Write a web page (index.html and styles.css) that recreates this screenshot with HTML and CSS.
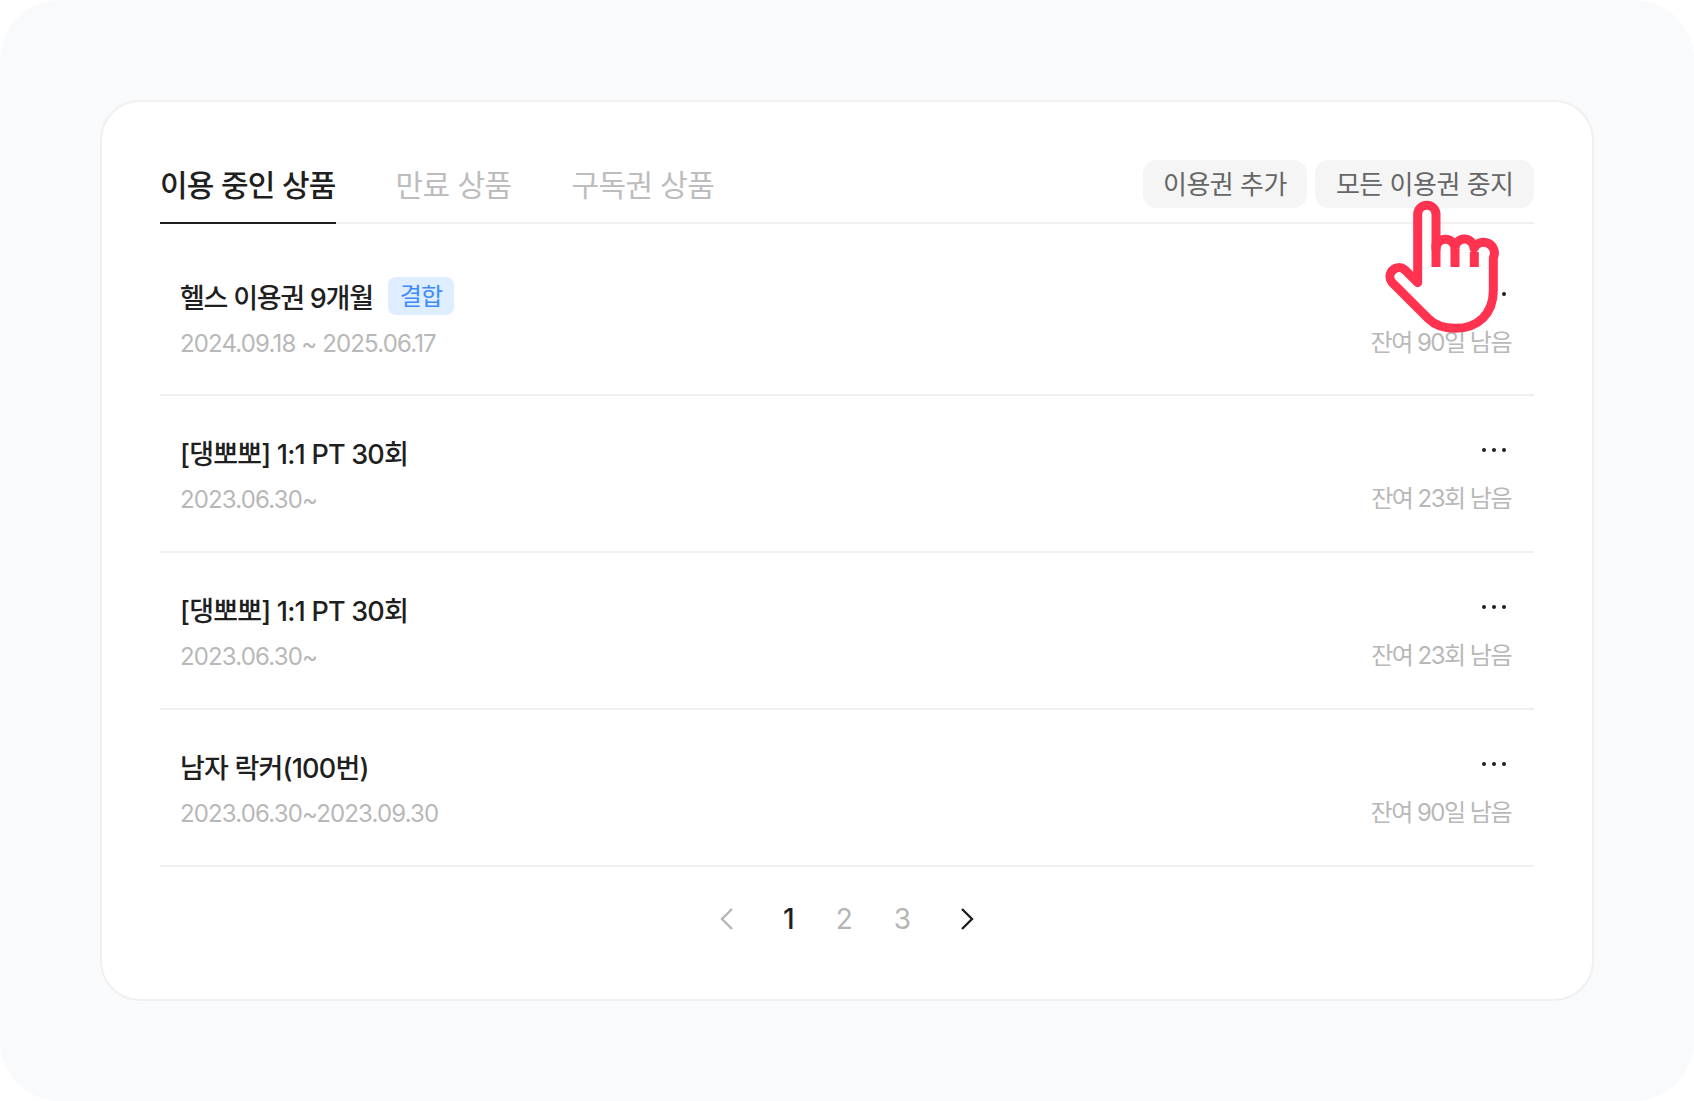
FILE: index.html
```html
<!DOCTYPE html>
<html lang="ko">
<head>
    <meta charset="UTF-8">
    <title>이용권 관리</title>
    <link rel="stylesheet" href="styles.css">
</head>
<body>
    <div class="page">
        <div class="card">
            <div class="tab-bar">
                <div class="tabs">
                    <div class="tab active">이용 중인 상품</div>
                    <div class="tab">만료 상품</div>
                    <div class="tab">구독권 상품</div>
                </div>
                <div class="actions">
                    <div class="btn">이용권 추가</div>
                    <div class="btn">모든 이용권 중지</div>
                </div>
            </div>

            <div class="row first">
                <div class="info">
                    <div class="title tight">헬스 이용권 9개월 <span class="badge">결합</span></div>
                    <div class="date">2024.09.18 ~ 2025.06.17</div>
                </div>
                <div class="side">
                    <div class="more"><i></i><i></i><i></i></div>
                    <div class="left">잔여 90일 남음</div>
                </div>
            </div>
            <div class="row">
                <div class="info">
                    <div class="title">[댕뽀뽀] 1:1 PT 30회</div>
                    <div class="date">2023.06.30~</div>
                </div>
                <div class="side">
                    <div class="more"><i></i><i></i><i></i></div>
                    <div class="left">잔여 23회 남음</div>
                </div>
            </div>
            <div class="row">
                <div class="info">
                    <div class="title">[댕뽀뽀] 1:1 PT 30회</div>
                    <div class="date">2023.06.30~</div>
                </div>
                <div class="side">
                    <div class="more"><i></i><i></i><i></i></div>
                    <div class="left">잔여 23회 남음</div>
                </div>
            </div>
            <div class="row">
                <div class="info">
                    <div class="title">남자 락커(100번)</div>
                    <div class="date">2023.06.30~2023.09.30</div>
                </div>
                <div class="side">
                    <div class="more"><i></i><i></i><i></i></div>
                    <div class="left">잔여 90일 남음</div>
                </div>
            </div>

            <div class="pager">
                <svg class="arrow" width="16" height="24" viewBox="0 0 16 24"><path d="M13 2 L3 12 L13 22" fill="none" stroke="#b5b5b5" stroke-width="2.4"/></svg>
                <span class="num current">1</span>
                <span class="num">2</span>
                <span class="num">3</span>
                <svg class="arrow" width="16" height="24" viewBox="0 0 16 24"><path d="M3 2 L13 12 L3 22" fill="none" stroke="#1f1f1f" stroke-width="2.4"/></svg>
            </div>

            <!-- cursor sits over the button and the first row -->
            <svg class="cursor" width="147" height="147" viewBox="780 170 441 441">
                <path d="M854 388 L893 427 V222 a27.5 27.5 0 0 1 55 0 V325 a28.5 28.5 0 0 1 57 0 a28.5 28.5 0 0 1 57 -1 a28.5 28.5 0 0 1 58 28 V450 C1120 520 1075 564 1005 564 C970 564 945 555 925 535 L816 426 A27 27 0 0 1 854 388 Z" fill="#fff" stroke="#ff334f" stroke-width="27" stroke-linejoin="round"/>
                <path d="M948 310 V380 M1005 325 V380 M1063 335 V380" fill="none" stroke="#ff334f" stroke-width="27"/>
            </svg>
        </div>
    </div>
</body>
</html>
```

FILE: styles.css
```css
body {
    margin: 0;
    background-color: #fff;
    font-family: Inter, "Noto Sans CJK KR", sans-serif;
    color: #1f1f1f;
}
.page {
    box-sizing: border-box;
    height: 1101px;
    padding: 100px;
    background-color: #f9fafc;
    border-radius: 60px;
}
.card {
    position: relative;
    box-sizing: border-box;
    height: 901px;
    padding: 58px 58px 0;
    background-color: #fff;
    border: 2px solid #f0f0f0;
    border-radius: 40px;
}
.tab-bar {
    display: flex;
    justify-content: space-between;
    align-items: flex-start;
    height: 62px;
    border-bottom: 2px solid #f0f0f0;
}
.tabs {
    display: flex;
    gap: 60px;
}
.tab {
    height: 62px;
    font-size: 30px;
    line-height: 50px;
    letter-spacing: -0.6px;
    color: #bdbdbd;
}
.tab.active {
    color: #1f1f1f;
    font-weight: 500;
    letter-spacing: -0.75px;
    border-bottom: 2px solid #1f1f1f;
}
.actions {
    display: flex;
    gap: 8px;
}
.btn {
    padding: 0 20.5px;
    height: 48px;
    line-height: 50px;
    font-size: 26px;
    letter-spacing: -0.5px;
    color: #666;
    background-color: #f5f5f5;
    border-radius: 14px;
}
.row {
    display: flex;
    justify-content: space-between;
    box-sizing: border-box;
    height: 157px;
    padding: 34px 20px 0;
    border-bottom: 2px solid #f0f0f0;
}
.row.first {
    height: 172px;
    padding-top: 50px;
}
.title {
    display: flex;
    align-items: center;
    gap: 15px;
    height: 44px;
    font-size: 27px;
    font-weight: 500;
    letter-spacing: -0.8px;
}
.title.tight {
    letter-spacing: -1.25px;
}
.badge {
    display: block;
    padding: 0 12px;
    height: 38px;
    line-height: 40px;
    font-size: 24px;
    font-weight: 400;
    letter-spacing: -0.8px;
    color: #3d8bff;
    background-color: #deedff;
    border-radius: 8px;
}
.date {
    margin-top: 8px;
    font-size: 24px;
    line-height: 36px;
    letter-spacing: -0.85px;
    color: #b8b8b8;
}
.side {
    display: flex;
    flex-direction: column;
    align-items: flex-end;
}
.more {
    display: flex;
    gap: 6px;
    height: 40px;
    align-items: center;
    margin-right: 8px;
}
.more i {
    display: block;
    width: 4px;
    height: 4px;
    border-radius: 50%;
    background-color: #1f1f1f;
}
.left {
    margin-top: 10.5px;
    margin-right: 3px;
    font-size: 24px;
    line-height: 36px;
    letter-spacing: -1.5px;
    color: #b8b8b8;
}
.pager {
    display: flex;
    justify-content: center;
    align-items: center;
    gap: 41px;
    height: 104px;
}
.arrow {
    margin: 0 7px;
}
.num {
    font-size: 28px;
    color: #b5b5b5;
}
.num.current {
    color: #1f1f1f;
    font-weight: 500;
}
.cursor {
    position: absolute;
    left: 1278px;
    top: 95px;
}
```
